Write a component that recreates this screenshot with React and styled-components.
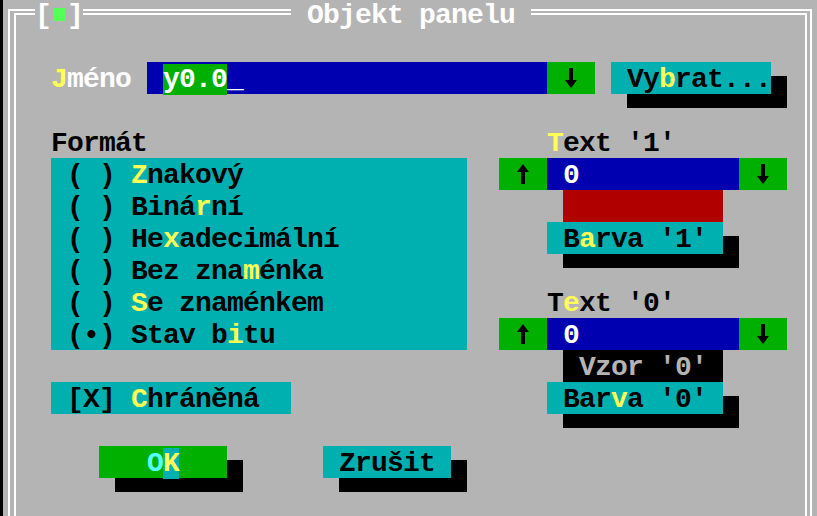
import React from "react"
import styled, { createGlobalStyle, css } from "styled-components"

const colors = {
  gray: "#b4b4b4",
  black: "#000000",
  white: "#ffffff",
  blue: "#0000b0",
  green: "#00b000",
  cyan: "#00b0b0",
  red: "#b00000",
  yellow: "#ffff55",
  lightCyan: "#55ffff",
  lightGreen: "#55ff55",
}

const GlobalStyle = createGlobalStyle`
  html, body {
    margin: 0;
    padding: 0;
    background: ${colors.gray};
    overflow: hidden;
  }
`

// one text cell is 16 x 32 px, like a doubled 8x16 VGA font
const place = css`
  grid-column: ${(p) => p.$col + 1} / span ${(p) => p.$span || 1};
  grid-row: ${(p) => p.$row + 1} / span ${(p) => p.$rows || 1};
`

const Screen = styled.div`
  width: 817px;
  height: 516px;
  box-sizing: border-box;
  border-left: 3px solid ${colors.black};
  background: ${colors.gray};
  overflow: hidden;
  font-family: "Liberation Mono", "DejaVu Sans Mono", monospace;
  font-size: 28px;
  letter-spacing: -0.8px;
  font-weight: bold;
  line-height: 36px;
  white-space: pre;
`

const Desk = styled.div`
  display: grid;
  grid-template-columns: repeat(51, 16px);
  grid-template-rows: repeat(17, 32px);
  margin-top: -2px;
`

const Frame = styled.div`
  ${place};
  margin: 11px 7px 0 5px;
  border: 2px solid ${colors.white};
  border-bottom: none;
`

const FrameInner = styled.div`
  height: 100%;
  margin: 2px 3px 0 4px;
  border: 2px solid ${colors.white};
  border-bottom: none;
`

const TitleTab = styled.div`
  ${place};
  display: flex;
  align-items: flex-start;
  background: ${colors.gray};
  color: ${colors.white};
`

const Lamp = styled.span`
  width: 12px;
  height: 13px;
  margin: 10px 2px 0;
  background: ${colors.lightGreen};
`

const Title = styled.div`
  ${place};
  background: ${colors.gray};
  color: ${colors.white};
`

const Label = styled.div`
  ${place};
  color: ${(p) => p.$color || colors.black};
`

const Hot = styled.span`
  color: ${colors.yellow};
`

const Field = styled.div`
  ${place};
  padding-left: 16px;
  background: ${colors.blue};
  color: ${colors.white};
`

const Selected = styled.span`
  background: ${colors.green};
`

const Arrow = styled.div`
  ${place};
  display: flex;
  justify-content: center;
  padding-top: 6px;
  box-sizing: border-box;
  background: ${colors.green};

  svg {
    display: block;
  }
`

const Button = styled.div`
  ${place};
  padding-left: ${(p) => p.$indent || 16}px;
  background: ${(p) => p.$bg || colors.cyan};
  color: ${colors.black};
  box-shadow: 16px 14px 0 ${colors.black};
`

const DefaultKey = styled.span`
  color: ${(p) => p.$color};
  background: ${(p) => p.$bg || "transparent"};
`

const Swatch = styled.div`
  ${place};
  background: ${colors.red};
`

const Pattern = styled.div`
  ${place};
  padding-left: 16px;
  background: ${colors.black};
  color: ${colors.gray};
`

const ListBox = styled.div`
  ${place};
  display: flex;
  flex-direction: column;
  background: ${colors.cyan};
  color: ${colors.black};
`

const Option = styled.div`
  height: 32px;
  padding-left: 16px;
`

const Check = styled.div`
  ${place};
  padding-left: 16px;
  background: ${colors.cyan};
  color: ${colors.black};
`

// the chunky DOS arrow glyph
const ArrowIcon = ({ up }) => (
  <svg
    width="12"
    height="20"
    viewBox="0 0 12 20"
    style={up ? { transform: "scaleY(-1)" } : undefined}
  >
    <rect x="4" y="0" width="4" height="14" fill="#000" />
    <polygon points="0,12 12,12 6,20" fill="#000" />
  </svg>
)

const formats = [
  ["( ) ", "", "Z", "nakový"],
  ["( ) ", "Biná", "r", "ní"],
  ["( ) ", "He", "x", "adecimální"],
  ["( ) ", "Bez zna", "m", "énka"],
  ["( ) ", "", "S", "e znaménkem"],
  ["(•) ", "Stav b", "i", "tu"],
]

const App = () => {
  return (
    <>
      <GlobalStyle />
      <Screen>
        <Desk>
          <Frame $col={0} $span={51} $row={0} $rows={17}>
            <FrameInner />
          </Frame>

          <TitleTab $col={2} $span={3} $row={0}>
            <span>[</span>
            <Lamp />
            <span>]</span>
          </TitleTab>
          <Title $col={18} $span={15} $row={0}>
            {" Objekt panelu "}
          </Title>

          <Label $col={3} $span={5} $row={2} $color={colors.white}>
            <Hot>J</Hot>méno
          </Label>
          <Field $col={9} $span={25} $row={2}>
            <Selected>y0.0</Selected>_
          </Field>
          <Arrow $col={34} $span={3} $row={2}>
            <ArrowIcon />
          </Arrow>
          <Button $col={38} $span={10} $row={2}>
            Vy<Hot>b</Hot>rat...
          </Button>

          <Label $col={3} $span={6} $row={4}>Formát</Label>
          <ListBox $col={3} $span={26} $row={5} $rows={6}>
            {formats.map(([mark, pre, key, post]) => (
              <Option key={pre + key}>
                {mark}
                {pre}
                <Hot>{key}</Hot>
                {post}
              </Option>
            ))}
          </ListBox>

          <Label $col={34} $span={8} $row={4}>
            <Hot>T</Hot>ext '1'
          </Label>
          <Arrow $col={31} $span={3} $row={5}>
            <ArrowIcon up />
          </Arrow>
          <Field $col={34} $span={12} $row={5}>0</Field>
          <Arrow $col={46} $span={3} $row={5}>
            <ArrowIcon />
          </Arrow>
          <Swatch $col={35} $span={10} $row={6} />
          <Button $col={34} $span={11} $row={7}>
            B<Hot>a</Hot>rva '1'
          </Button>

          <Label $col={34} $span={8} $row={9}>
            T<Hot>e</Hot>xt '0'
          </Label>
          <Arrow $col={31} $span={3} $row={10}>
            <ArrowIcon up />
          </Arrow>
          <Field $col={34} $span={12} $row={10}>0</Field>
          <Arrow $col={46} $span={3} $row={10}>
            <ArrowIcon />
          </Arrow>
          <Pattern $col={35} $span={10} $row={11}>Vzor '0'</Pattern>
          <Button $col={34} $span={11} $row={12}>
            Bar<Hot>v</Hot>a '0'
          </Button>

          <Check $col={3} $span={15} $row={12}>
            [X] <Hot>C</Hot>hráněná
          </Check>

          <Button $col={6} $span={8} $row={14} $bg={colors.green} $indent={48}>
            <DefaultKey $color={colors.lightCyan}>O</DefaultKey>
            <DefaultKey $color={colors.yellow} $bg={colors.cyan}>K</DefaultKey>
          </Button>
          <Button $col={20} $span={8} $row={14}>
            Zrušit
          </Button>
        </Desk>
      </Screen>
    </>
  )
}

export default App
